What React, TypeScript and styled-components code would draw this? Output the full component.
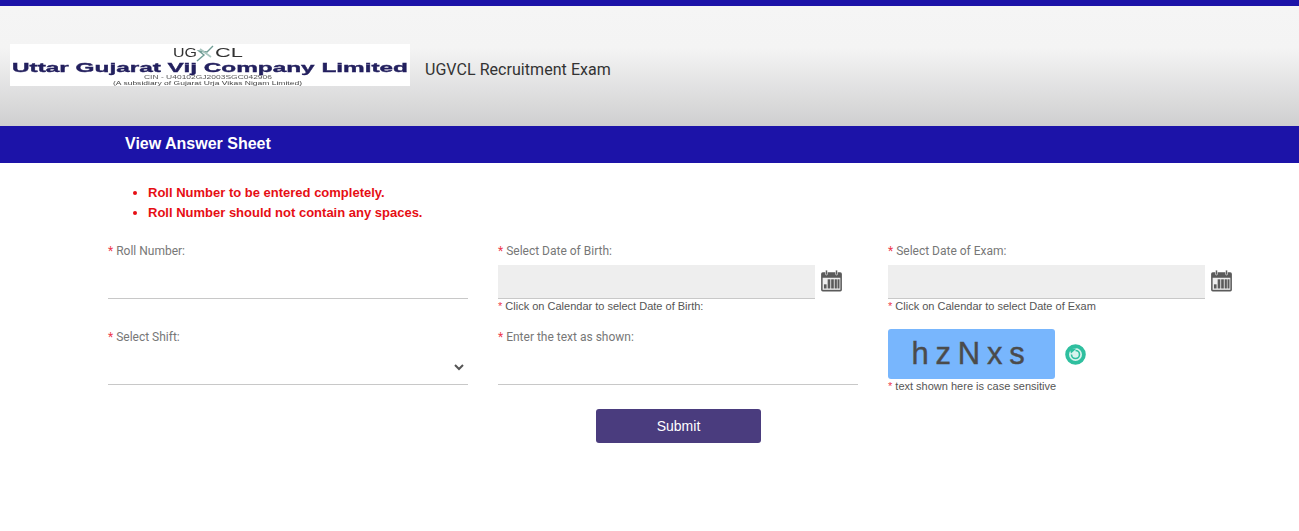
import React from "react";
import styled, { createGlobalStyle } from "styled-components";

const Global = createGlobalStyle`
  html, body { margin: 0; padding: 0; background: #fff; }
  body { font-family: "Liberation Sans", Arial, sans-serif; }
`;

const Page = styled.div`
  width: 1299px;
  height: 531px;
  overflow: hidden;
  background: #fff;
  border-top: 6px solid #1c13a8;
  box-sizing: border-box;
`;

const Header = styled.header`
  height: 120px;
  display: flex;
  align-items: center;
  padding: 0 0 0 10px;
  gap: 15px;
  background: linear-gradient(to bottom, #f5f5f5 0%, #f4f4f4 35%, #cfcfd0 100%);
`;

const LogoBox = styled.svg`
  display: block;
  width: 400px;
  height: 42px;
  margin-top: -2px;
  flex: none;
`;

const ExamName = styled.div`
  font-family: Roboto, sans-serif;
  font-size: 16px;
  color: #333;
  margin-top: 6px;
  letter-spacing: 0.05px;
`;

const TitleBar = styled.div`
  height: 35px;
  background: #1c13a8;
  display: flex;
  align-items: center;
  padding: 0 0 2px 125px;
  color: #fff;
  font-size: 16px;
  font-weight: 700;
`;

const Notes = styled.ul`
  margin: 0;
  padding: 20px 0 0 148px;
  list-style: disc;
  color: #e60e14;
  font-size: 13px;
  font-weight: 700;
  line-height: 20px;
`;

const Form = styled.div`
  display: grid;
  grid-template-columns: repeat(3, 360px);
  column-gap: 30px;
  padding: 20px 0 0 108px;
`;

const Field = styled.div<{ $h: number }>`
  height: ${(p) => p.$h}px;
  min-width: 0;
`;

const Label = styled.div`
  font-family: Roboto, sans-serif;
  font-size: 12px;
  line-height: 16px;
  color: #777;
`;

const Star = styled.span`
  color: #ee3a4e;
  font-weight: 400;
`;

const LineInput = styled.div`
  height: 33px;
  margin-top: 1px;
  padding-top: 5px;
  border-bottom: 1px solid #c8c8c8;
  display: flex;
  align-items: center;
  justify-content: flex-end;
`;

const DateRow = styled.div`
  display: flex;
  align-items: flex-start;
  gap: 5px;
  margin-top: 6px;
`;

const DateInput = styled.div`
  width: 317px;
  height: 33px;
  background: #eee;
  border-bottom: 1px solid #c8c8c8;
`;

const CalendarIcon = styled.svg`
  flex: none;
  width: 23px;
  height: 23px;
  margin-top: 4px;
`;

const Hint = styled.div`
  font-size: 11px;
  line-height: 14px;
  color: #555;
`;

const CaptchaRow = styled.div`
  display: flex;
  align-items: center;
  gap: 10px;
`;

const Captcha = styled.div`
  width: 167px;
  height: 50px;
  background: #78b6fd;
  border-radius: 3px;
  display: flex;
  align-items: center;
  justify-content: center;
  font-size: 31px;
  color: #4b4b4b;
  letter-spacing: 6.8px;
  -webkit-text-stroke: 0.4px #4b4b4b;
`;

const RefreshIcon = styled.svg`
  width: 21px;
  height: 21px;
  margin-top: 1px;
`;

const SubmitRow = styled.div`
  grid-column: 1 / -1;
  padding: 0 0 0 488px;
`;

const Submit = styled.button`
  width: 165px;
  height: 34px;
  border: 0;
  border-radius: 3px;
  background: #4a3c7e;
  color: #fff;
  font-family: "Liberation Sans", Arial, sans-serif;
  font-size: 14px;
`;

const Calendar = () => (
  <CalendarIcon viewBox="0 0 21 21">
    <path d="M1 4.5Q1 3 2.5 3H18.5Q20 3 20 4.5V19Q20 20.5 18.5 20.5H2.5Q1 20.5 1 19Z" fill="#5a5a5a" />
    <rect x="2.4" y="8" width="16.2" height="11" fill="#eee" />
    <rect x="5" y="1" width="1.8" height="4.5" rx=".9" fill="#5a5a5a" stroke="#fff" strokeWidth=".5" />
    <rect x="14.2" y="1" width="1.8" height="4.5" rx=".9" fill="#5a5a5a" stroke="#fff" strokeWidth=".5" />
    <g fill="#5a5a5a">
      <rect x="3.6" y="14" width="2.4" height="3.8" />
      <rect x="7" y="9.4" width="2.4" height="8.4" />
      <rect x="10.2" y="9.4" width="2.4" height="8.4" />
      <rect x="13.4" y="9.4" width="2" height="8.4" />
      <rect x="16" y="9.4" width="1.8" height="8.4" />
    </g>
  </CalendarIcon>
);

const Refresh = () => (
  <RefreshIcon viewBox="0 0 21 21">
    <circle cx="10.5" cy="10.5" r="8.4" fill="#d9f3ed" stroke="#2fbf9f" strokeWidth="3.8" />
    <path d="M6.5 10.5A4 4 0 1 0 10.5 6.5" fill="none" stroke="#2fbf9f" strokeWidth="1.6" />
    <path d="M4.5 4L11.5 4.5L6 9.5Z" fill="#2fbf9f" />
  </RefreshIcon>
);

const Chevron = () => (
  <svg width="10" height="7" viewBox="0 0 10 7" style={{ marginRight: 4 }}>
    <path d="M1 1L5 5L9 1" fill="none" stroke="#555" strokeWidth="2" />
  </svg>
);

const Logo = () => (
  <LogoBox viewBox="0 0 400 42">
    <defs>
      <filter id="soft" x="-5%" y="-20%" width="110%" height="140%">
        <feGaussianBlur stdDeviation="0.35" />
      </filter>
    </defs>
    <rect width="400" height="42" fill="#fff" />
    <g filter="url(#soft)">
      <text x="163" y="13" fontFamily="Liberation Sans" fontSize="12" fill="#333" textLength="24" lengthAdjust="spacingAndGlyphs">UG</text>
      <text x="205" y="13" fontFamily="Liberation Sans" fontSize="12" fill="#333" textLength="28" lengthAdjust="spacingAndGlyphs">CL</text>
      <path d="M203 2L197 8L189 7L194 11L187 17" stroke="#6f9c94" strokeWidth="1.4" fill="none" />
      <path d="M190 5L201 13" stroke="#a8c6bf" strokeWidth="1.6" fill="none" />
      <text x="2" y="27.5" fontFamily="Liberation Sans" fontWeight="700" fontSize="13" fill="#23205e" stroke="#23205e" strokeWidth="0.35" textLength="396" lengthAdjust="spacingAndGlyphs">Uttar Gujarat Vij Company Limited</text>
      <text x="134" y="35" fontFamily="Liberation Sans" fontSize="5" fill="#555" textLength="128" lengthAdjust="spacingAndGlyphs">CIN - U40102GJ2003SGC042906</text>
      <text x="103" y="40.5" fontFamily="Liberation Sans" fontSize="5" fill="#444" textLength="189" lengthAdjust="spacingAndGlyphs">(A subsidiary of Gujarat Urja Vikas Nigam Limited)</text>
    </g>
  </LogoBox>
);

export default function App() {
  return (
    <Page>
      <Global />
      <Header>
        <Logo />
        <ExamName>UGVCL Recruitment Exam</ExamName>
      </Header>
      <TitleBar>View Answer Sheet</TitleBar>
      <Notes>
        <li>Roll Number to be entered completely.</li>
        <li>Roll Number should not contain any spaces.</li>
      </Notes>
      <Form>
        <Field $h={86}>
          <Label><Star>*</Star> Roll Number:</Label>
          <LineInput />
        </Field>
        <Field $h={86}>
          <Label><Star>*</Star> Select Date of Birth:</Label>
          <DateRow>
            <DateInput />
            <Calendar />
          </DateRow>
          <Hint><Star>*</Star> Click on Calendar to select Date of Birth:</Hint>
        </Field>
        <Field $h={86}>
          <Label><Star>*</Star> Select Date of Exam:</Label>
          <DateRow>
            <DateInput />
            <Calendar />
          </DateRow>
          <Hint><Star>*</Star> Click on Calendar to select Date of Exam</Hint>
        </Field>
        <Field $h={80}>
          <Label><Star>*</Star> Select Shift:</Label>
          <LineInput><Chevron /></LineInput>
        </Field>
        <Field $h={80}>
          <Label><Star>*</Star> Enter the text as shown:</Label>
          <LineInput />
        </Field>
        <Field $h={80}>
          <CaptchaRow>
            <Captcha>hzNxs</Captcha>
            <Refresh />
          </CaptchaRow>
          <Hint><Star>*</Star> text shown here is case sensitive</Hint>
        </Field>
        <SubmitRow>
          <Submit>Submit</Submit>
        </SubmitRow>
      </Form>
    </Page>
  );
}
